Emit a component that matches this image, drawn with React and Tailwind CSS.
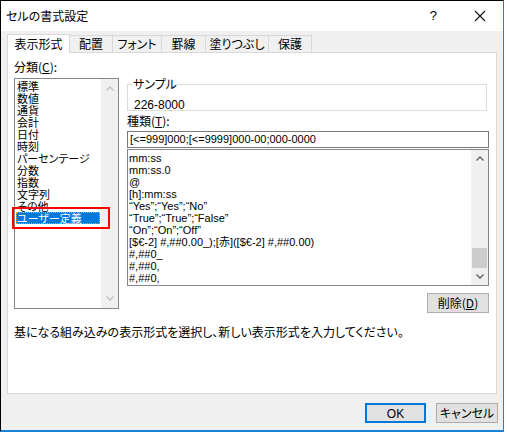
import React from "react";

const jp = "font-['Noto_Sans_CJK_JP','Noto_Sans',sans-serif] [font-feature-settings:'palt']";
const latin = "font-['Liberation_Sans','Noto_Sans_CJK_JP',sans-serif]";

const tabs = [
  { label: "表示形式", w: "w-[63px]", active: true },
  { label: "配置", w: "w-[43px]" },
  { label: "フォント", w: "w-[49px]" },
  { label: "罫線", w: "w-[44px]" },
  { label: "塗りつぶし", w: "w-[63px]" },
  { label: "保護", w: "w-[43px]" },
];

const categories = ["標準", "数値", "通貨", "会計", "日付", "時刻", "パーセンテージ", "分数", "指数", "文字列", "その他"];

const formats = [
  "mm:ss",
  "mm:ss.0",
  "@",
  "[h]:mm:ss",
  "“Yes”;“Yes”;“No”",
  "“True”;“True”;“False”",
  "“On”;“On”;“Off”",
  "[$€-2] #,##0.00_);[赤]([$€-2] #,##0.00)",
  "#,##0_",
  "#,##0,",
  "#,##0,",
];

function Chevron({ up, color }) {
  return (
    <svg width="8" height="5" viewBox="0 0 8 5">
      <path d={up ? "M0.5 4.5 L4 1 L7.5 4.5" : "M0.5 0.5 L4 4 L7.5 0.5"} fill="none" stroke={color} strokeWidth="1.4" />
    </svg>
  );
}

export default function App() {
  return (
    <div className={`w-[507px] h-[432px] bg-white overflow-hidden text-[12px] text-black ${jp}`}>
      <div className="w-[504px] h-[432px] border-t border-l border-black border-r border-r-[#1883d7] border-b-2 border-b-[#1883d7] bg-[#f0f0f0] flex flex-col">
        {/* title bar */}
        <div className="h-[30px] bg-white flex items-center pl-[5px] shrink-0">
          <span className="text-[12px] leading-none">セルの書式設定</span>
          <span className={`ml-auto mr-[37px] text-[13px] ${latin}`}>?</span>
          <svg width="12" height="12" viewBox="0 0 12 12" className="mr-[17px]">
            <path d="M1 1 L11 11 M11 1 L1 11" stroke="#111" strokeWidth="1.1" />
          </svg>
        </div>

        <div className="pl-[6px] pr-[7px] pt-[2px] flex flex-col">
          {/* tabs */}
          <div className="flex items-end h-[19px]">
            {tabs.map((t) =>
              t.active ? (
                <div key={t.label} className={`${t.w} h-[19px] bg-white border border-b-0 border-[#d9d9d9] relative z-10 -mb-px flex items-center justify-center text-[12px]`}>
                  {t.label}
                </div>
              ) : (
                <div key={t.label} className={`${t.w} h-[17px] border border-l-0 border-b-0 border-[#d9d9d9] flex items-center justify-center text-[12px]`}>
                  {t.label}
                </div>
              )
            )}
          </div>

          {/* panel */}
          <div className="w-[490px] h-[342px] bg-white border border-[#d9d9d9] pl-[6px] pt-[7px] flex flex-col">
            <div className="flex">
              {/* left column */}
              <div className="w-[105px] flex flex-col">
                <div className="h-[18px] leading-[14px]">
                  分類(<span className="underline">C</span>):
                </div>
                <div className="h-[231px] border border-[#828790] flex">
                  <div className="flex-1 pt-px pl-px flex flex-col text-[11px] leading-[12px]">
                    {categories.map((c) => (
                      <div key={c} className="h-[12px] pl-[1px]">{c}</div>
                    ))}
                    <div className="relative h-[12px]">
                      <div className="w-[84px] h-[12px] bg-[#0078d7] text-white outline-1 outline-dotted outline-[#f5a623] -outline-offset-1 pl-[1px]">ユーザー定義</div>
                      <div className="absolute -left-[4px] -top-[5px] w-[98px] h-[22px] border-2 border-[#ff0000]" />
                    </div>
                  </div>
                  <div className="w-[17px] bg-[#f0f0f0] flex flex-col items-center justify-between py-[7px]">
                    <Chevron up color="#c2c2c2" />
                    <Chevron color="#c2c2c2" />
                  </div>
                </div>
              </div>

              {/* right column */}
              <div className="ml-[8px] w-[362px] flex flex-col">
                <fieldset className="w-[360px] h-[33px] border border-[#dcdcdc] px-[5px] mt-[18px]">
                  <legend className="px-0 text-[12px] leading-[12px]">サンプル</legend>
                  <div className={`pt-[9px] pl-[1px] ${latin} text-[12px] leading-[12px]`}>226-8000</div>
                </fieldset>
                <div className="mt-[3px] h-[16px] leading-[14px]">
                  種類(<span className="underline">T</span>):
                </div>
                <div className={`mt-[1px] h-[17px] border border-[#7a7a7a] pl-[2px] ${latin} text-[11px] leading-[15px]`}>
                  [&lt;=999]000;[&lt;=9999]000-00;000-0000
                </div>
                <div className="mt-[1px] h-[137px] border border-[#828790] flex overflow-hidden">
                  <div className={`flex-1 pl-[1px] pt-[2px] ${latin} text-[11px] leading-[12px]`}>
                    {formats.map((f, i) => (
                      <div key={i} className="h-[12px] whitespace-nowrap">{f}</div>
                    ))}
                  </div>
                  <div className="w-[17px] bg-[#f0f0f0] flex flex-col items-center">
                    <div className="h-[17px] flex items-center justify-center">
                      <Chevron up color="#606060" />
                    </div>
                    <div className="flex-1" />
                    <div className="w-[15px] h-[20px] bg-[#cdcdcd]" />
                    <div className="h-[17px] flex items-center justify-center">
                      <Chevron color="#606060" />
                    </div>
                  </div>
                </div>
                <div className="flex justify-end mt-[7px]">
                  <button className="w-[62px] h-[20px] bg-[#e1e1e1] border border-[#adadad] text-[12px] leading-none">
                    削除(<span className="underline">D</span>)
                  </button>
                </div>
              </div>
            </div>
            <div className="mt-[12px] leading-[14px]">
              基になる組み込みの表示形式を選択し、新しい表示形式を入力してください。
            </div>
          </div>

          {/* footer buttons */}
          <div className="flex justify-end gap-[10px] mt-[9px] -mr-[2px]">
            <button className={`w-[61px] h-[20px] bg-[#e1e1e1] border-2 border-[#0078d7] ${latin} text-[12px]`}>OK</button>
            <button className="w-[62px] h-[20px] bg-[#e1e1e1] border border-[#adadad] text-[12px]">キャンセル</button>
          </div>
        </div>
      </div>
    </div>
  );
}
